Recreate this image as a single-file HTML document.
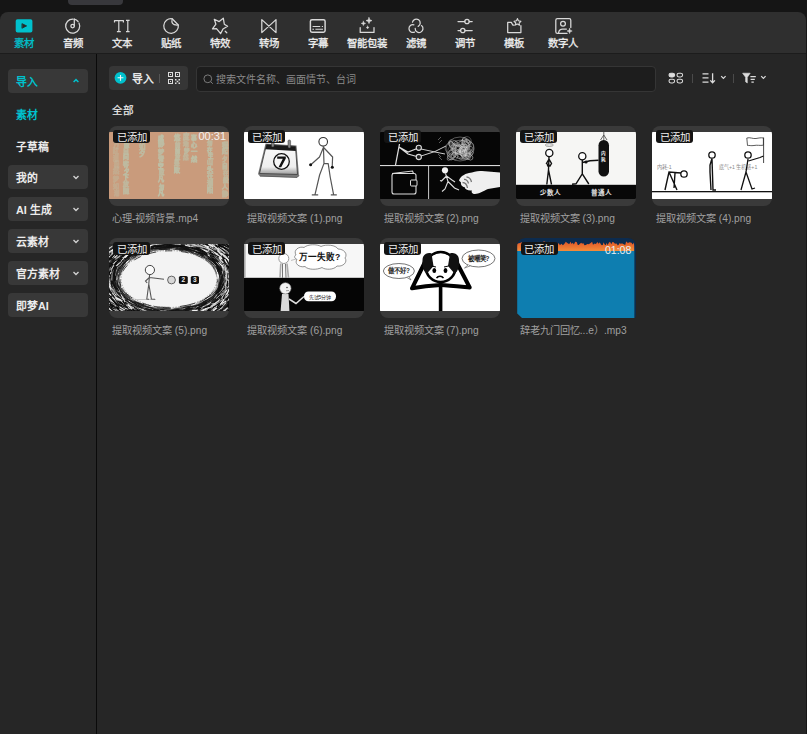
<!DOCTYPE html>
<html lang="zh-CN">
<head>
<meta charset="utf-8">
<style>
*{box-sizing:border-box;margin:0;padding:0}
html,body{width:807px;height:734px;overflow:hidden;background:#262626;font-family:"Liberation Sans",sans-serif;color:#e6e6e6}
.abs{position:absolute}
#top{left:0;top:0;width:807px;height:22px;background:#151515}
#toptab{left:68px;top:0;width:55px;height:4.8px;background:#38383c;border-radius:0 0 4px 4px}
#bar{left:0;top:12px;width:806px;height:41px;background:#2f2f2f;border-radius:8px 8px 0 0}
#barline{left:0;top:53px;width:806px;height:1px;background:#1c1c1c}
#rightedge{left:806px;top:0;width:1px;height:734px;background:#161616}
.tool{position:absolute;top:12px;width:49px;height:41px;text-align:center}
.tool svg{position:absolute;left:16px;top:5px}
.lb{position:absolute;top:36.8px;margin-left:-0.8px;width:49px;font-size:10.4px;line-height:14px;color:#f0f0f0;text-align:center;-webkit-text-stroke:0.3px currentColor}
#divider{left:96px;top:54px;width:1px;height:680px;background:#0a0a0a}
.sbtn{position:absolute;left:8px;width:80px;height:24px;background:#383838;border-radius:4px}
.stxt{position:absolute;left:16px;margin-top:1px;font-size:10.8px;line-height:24px;color:#ececec;font-weight:bold}
.chev{position:absolute;left:73px;top:9px}
.card{position:absolute;width:120px;height:80px;background:#3a3a3a;border-radius:8px;overflow:hidden}
.card .img{position:absolute;left:0;top:6px;width:120px;height:67px;overflow:hidden}
.badge{position:absolute;left:4.3px;top:4.3px;width:37px;height:13px;background:#141414;border-radius:3px;font-size:10.4px;line-height:16px;text-align:center;color:#f0f0f0}
.dur{position:absolute;right:3px;top:4px;font-size:11px;line-height:12px;color:#f0f0f0}
.clabel{position:absolute;font-size:10.2px;line-height:14px;color:#a0a0a0;white-space:nowrap}
</style>
</head>
<body>
<div class="abs" id="top"></div>
<div class="abs" id="toptab"></div>
<div class="abs" id="bar"></div>
<div class="abs" id="barline"></div>

<!-- toolbar -->
<svg class="abs" style="left:0;top:0" width="600" height="54" viewBox="0 0 600 54" fill="none" stroke="#d9d9d9" stroke-width="1.25" stroke-linecap="round" stroke-linejoin="round">
<rect x="15.7" y="19.2" width="16.7" height="13.4" rx="1.8" fill="#00c1cd" stroke="none"/>
<path d="M22.3 23.8 L26.6 25.9 L22.3 28.1 Z" fill="#262626" stroke="#262626" stroke-width="0.8"/>
<path d="M79 23.05 A7 7 0 1 1 73.1 19.1"/>
<path d="M74.3 19.1 A7 7 0 0 1 78.1 21.5"/>
<path d="M74.3 19.1 V26"/>
<circle cx="72.6" cy="26.1" r="1.75"/>
<g stroke-width="1.2" stroke-linecap="butt">
<path d="M114.3 20.7 H123.6 M114.5 20.2 V22.4 M123.4 20.2 V22.4 M118.8 20.6 V31.7 M116.9 31.7 H120.8"/>
<path d="M126 20.4 H129.6 M127.8 20.4 V31.7 M126 31.7 H129.6"/>
</g>
<path d="M172.2 18.8 A7.3 7.3 0 1 0 178.3 25 L172.2 18.8 Z"/>
<path d="M172.2 18.8 C171.3 22 171.8 25.6 178.3 25" stroke-width="1.15"/>
<path d="M214.3 19.3 L219.2 21.6 L223.3 18.2 L224.3 24.2 L227.6 26.3 L223 29 L220.6 33.6 L216.5 28.7 L212.5 28.9 L215.9 24.2 Z"/>
<path d="M225.2 31.2 L226.8 32.8"/>
<path d="M261.8 19.6 V32.6 L276 19.6 V32.6 Z"/>
<rect x="310.4" y="19.7" width="14.7" height="12.5" rx="1.6" stroke-width="1.45"/>
<path d="M312.6 26.5 H320.2 M321.8 26.5 H323" stroke-width="1.1" stroke-linecap="butt"/>
<path d="M312.4 29.3 H314 M315.4 29.3 H323" stroke-width="1.1" stroke-linecap="butt"/>
<path d="M360.2 27.5 V32.4 H374 V27.5"/>
<path d="M369 17.6 L369.8 19.8 L372 20.6 L369.8 21.4 L369 23.6 L368.2 21.4 L366 20.6 L368.2 19.8 Z" fill="#d9d9d9" stroke-width="0.6"/>
<path d="M363.4 21.2 L364 22.8 L365.6 23.4 L364 24 L363.4 25.6 L362.8 24 L361.2 23.4 L362.8 22.8 Z" fill="#d9d9d9" stroke-width="0.5"/>
<path d="M367.6 26 L368 27.1 L369.1 27.5 L368 27.9 L367.6 29 L367.2 27.9 L366.1 27.5 L367.2 27.1 Z" fill="#d9d9d9" stroke-width="0.4"/>
<path d="M412.5 22.2 A3.9 3.9 0 1 1 418.2 26.4"/>
<path d="M413.9 24.8 A3.9 3.9 0 1 0 414.5 32.1"/>
<path d="M415.2 28.4 A3.9 3.9 0 1 0 421.5 25.6"/>
<path d="M458 21.5 H464.8 M469.2 21.5 H472.2"/>
<circle cx="467" cy="21.5" r="2.2"/>
<path d="M458 30.5 H460.6 M465 30.5 H472.2"/>
<circle cx="462.8" cy="30.5" r="2.2"/>
<path d="M514.2 25.2 H512.9 L511.3 22.4 H507.7 V32.6 H520.9 V25.6"/>
<path d="M517.5 18.6 L518.4 20.8 L520.9 21.4 L519.1 23.1 L519.5 25.2 L517.4 24.1 L515.3 25.1 L515.8 23 L514 21.3 L516.5 20.8 Z" stroke-width="1.1"/>
<path d="M567 33.4 H557.4 Q555.8 33.4 555.8 31.8 V20.2 Q555.8 18.6 557.4 18.6 H569.2 Q570.8 18.6 570.8 20.2 V27.6"/>
<circle cx="563" cy="23.8" r="2.4"/>
<path d="M558.6 32.6 C559 30.2 560.5 29.1 562.5 29.1 H566.4"/>
<path d="M569.6 28.4 L570.3 30.3 L572.2 31 L570.3 31.7 L569.6 33.6 L568.9 31.7 L567 31 L568.9 30.3 Z" fill="#d9d9d9" stroke-width="0.5"/>
</svg>
<div class="lb" style="left:0px;color:#00c1cd">素材</div>
<div class="lb" style="left:49px">音频</div>
<div class="lb" style="left:98px">文本</div>
<div class="lb" style="left:147px">贴纸</div>
<div class="lb" style="left:196px">特效</div>
<div class="lb" style="left:245px">转场</div>
<div class="lb" style="left:294px">字幕</div>
<div class="lb" style="left:343px">智能包装</div>
<div class="lb" style="left:392px">滤镜</div>
<div class="lb" style="left:441px">调节</div>
<div class="lb" style="left:490px">模板</div>
<div class="lb" style="left:539px">数字人</div>

<div class="abs" id="divider"></div>

<!-- sidebar -->
<div class="sbtn" style="top:69px"></div>
<div class="stxt" style="top:69px;color:#00c1cd">导入</div>
<svg class="abs" style="left:72px;top:77px" width="8" height="8" viewBox="0 0 8 8"><path d="M1.6 5 L4 2.6 L6.4 5" fill="none" stroke="#00c1cd" stroke-width="1.5"/></svg>
<div class="stxt" style="top:102px;color:#00c1cd">素材</div>
<div class="stxt" style="top:134px">子草稿</div>
<div class="sbtn" style="top:165px"></div><div class="stxt" style="top:165px">我的</div>
<div class="sbtn" style="top:197px"></div><div class="stxt" style="top:197px">AI 生成</div>
<div class="sbtn" style="top:229px"></div><div class="stxt" style="top:229px">云素材</div>
<div class="sbtn" style="top:261px"></div><div class="stxt" style="top:261px">官方素材</div>
<div class="sbtn" style="top:293px"></div><div class="stxt" style="top:293px">即梦AI</div>
<svg class="abs" style="left:72px;top:172.5px" width="8" height="8" viewBox="0 0 8 8"><path d="M1.5 3 L4 5.5 L6.5 3" fill="none" stroke="#d0d0d0" stroke-width="1.4"/></svg>
<svg class="abs" style="left:72px;top:204.5px" width="8" height="8" viewBox="0 0 8 8"><path d="M1.5 3 L4 5.5 L6.5 3" fill="none" stroke="#d0d0d0" stroke-width="1.4"/></svg>
<svg class="abs" style="left:72px;top:236.5px" width="8" height="8" viewBox="0 0 8 8"><path d="M1.5 3 L4 5.5 L6.5 3" fill="none" stroke="#d0d0d0" stroke-width="1.4"/></svg>
<svg class="abs" style="left:72px;top:268.5px" width="8" height="8" viewBox="0 0 8 8"><path d="M1.5 3 L4 5.5 L6.5 3" fill="none" stroke="#d0d0d0" stroke-width="1.4"/></svg>

<!-- main header -->
<div class="abs" style="left:109px;top:66px;width:79px;height:24px;background:#363636;border-radius:4px"></div>
<svg class="abs" style="left:114px;top:71px" width="13" height="13" viewBox="0 0 13 13"><circle cx="6.5" cy="6.8" r="5.9" fill="#00c1cd"/><path d="M6.5 3.9 V9.7 M3.6 6.8 H9.4" stroke="#f4f4f4" stroke-width="1.1"/></svg>
<div class="abs" style="left:131.5px;top:67px;font-size:10.8px;line-height:24px;color:#e8e8e8;font-weight:bold">导入</div>
<div class="abs" style="left:159px;top:74px;width:1px;height:9px;background:#555"></div>
<svg class="abs" style="left:167px;top:71px" width="14" height="14" viewBox="0 0 14 14" fill="none" stroke="#dcdcdc" stroke-width="1"><rect x="1.5" y="1.5" width="4" height="4"/><rect x="8.5" y="1.5" width="4" height="4"/><rect x="1.5" y="8.5" width="4" height="4"/><path d="M3 3 H4 V4 H3Z M10 3 H11 V4 H10Z M3 10 H4 V11 H3Z M8 8 H9.5 V9.5 H8Z M11.5 8 H13 V9.5 H11.5Z M9.7 9.7 H11.3 V11.3 H9.7Z M8 11.5 H9.5 V13 H8Z M11.5 11.5 H13 V13 H11.5Z" fill="#dcdcdc" stroke="none"/></svg>
<div class="abs" style="left:196px;top:66px;width:460px;height:26px;background:#1d1d1d;border:1px solid #353535;border-radius:4px"></div>
<svg class="abs" style="left:203px;top:73.5px" width="11" height="11" viewBox="0 0 11 11"><circle cx="4.8" cy="4.8" r="3.9" fill="none" stroke="#7a7a7a" stroke-width="1"/><path d="M7.7 7.7 L9.8 9.8" stroke="#7a7a7a" stroke-width="1"/></svg>
<div class="abs" style="left:216px;top:67px;font-size:10px;line-height:25px;color:#8a8a8a">搜索文件名称、画面情节、台词</div>

<svg class="abs" style="left:668px;top:72px" width="16" height="12" viewBox="0 0 16 12" fill="none" stroke="#dcdcdc" stroke-width="1.1"><rect x="1" y="1.2" width="5.6" height="3.8" rx="1.9" fill="#dcdcdc"/><rect x="9" y="1.2" width="5.6" height="3.8" rx="1.9"/><rect x="1" y="7.2" width="5.6" height="3.8" rx="1.9"/><rect x="9" y="7.2" width="5.6" height="3.8" rx="1.9"/></svg>
<div class="abs" style="left:692px;top:74px;width:1px;height:9px;background:#4a4a4a"></div>
<svg class="abs" style="left:702px;top:72px" width="26" height="12" viewBox="0 0 26 12" fill="none" stroke="#dcdcdc" stroke-width="1.3"><path d="M0.5 1.8 H6.5 M0.5 5.9 H6.5 M0.5 10.2 H6.5 M10.6 1.2 V10.8 M8.3 8.4 L10.6 10.8 L12.9 8.4"/><path d="M19.2 4.2 L21.4 6.4 L23.6 4.2" stroke-width="1.2"/></svg>
<div class="abs" style="left:733px;top:74px;width:1px;height:9px;background:#4a4a4a"></div>
<svg class="abs" style="left:742px;top:72px" width="26" height="12" viewBox="0 0 26 12" fill="none" stroke="#dcdcdc" stroke-width="1.2"><path d="M0.6 1.2 H8.2 L5.3 5.3 V11 L3.6 9.8 V5.3 Z" fill="#dcdcdc" stroke-width="0.6"/><path d="M8.4 4.6 H13.8 M8.6 7.4 H12.8 M9.4 10.2 H11.8"/><path d="M19.2 4.2 L21.4 6.4 L23.6 4.2"/></svg>
<div class="abs" style="left:112px;top:102.3px;font-size:10.6px;line-height:16px;color:#ececec;-webkit-text-stroke:0.2px #ececec">全部</div>

<!-- CARDS -->
<div id="cards"><div class="card" style="left:109px;top:126px"><div class="img"><svg width="120" height="68" viewBox="0 0 120 68"><defs><filter id="vb" x="-10%" y="-10%" width="120%" height="120%"><feGaussianBlur stdDeviation="0.35"/></filter></defs><rect width="120" height="68" fill="#c99b7c"/><g filter="url(#vb)"><text x="7.0" y="14.5" font-size="6.3" text-anchor="middle" fill="#bdbfa6" stroke="#bdbfa6" stroke-width="0.55" opacity="0.43" font-weight="bold">万</text><text x="7.0" y="21.3" font-size="5.8" text-anchor="middle" fill="#bdbfa6" stroke="#bdbfa6" stroke-width="0.55" opacity="0.43" font-weight="bold">红</text><text x="7.0" y="27.6" font-size="5.5" text-anchor="middle" fill="#bdbfa6" stroke="#bdbfa6" stroke-width="0.55" opacity="0.40" font-weight="bold">潮</text><text x="7.0" y="34.1" font-size="5.3" text-anchor="middle" fill="#bdbfa6" stroke="#bdbfa6" stroke-width="0.55" opacity="0.43" font-weight="bold">程</text><text x="7.0" y="40.9" font-size="6.3" text-anchor="middle" fill="#bdbfa6" stroke="#bdbfa6" stroke-width="0.55" opacity="0.45" font-weight="bold">然</text><text x="7.0" y="48.5" font-size="5.9" text-anchor="middle" fill="#bdbfa6" stroke="#bdbfa6" stroke-width="0.55" opacity="0.43" font-weight="bold">梦</text><text x="7.0" y="56.2" font-size="5.9" text-anchor="middle" fill="#bdbfa6" stroke="#bdbfa6" stroke-width="0.55" opacity="0.41" font-weight="bold">如</text><text x="7.0" y="63.0" font-size="5.3" text-anchor="middle" fill="#bdbfa6" stroke="#bdbfa6" stroke-width="0.55" opacity="0.42" font-weight="bold">潮</text><text x="17.0" y="14.5" font-size="5.3" text-anchor="middle" fill="#bdbfa6" stroke="#bdbfa6" stroke-width="0.55" opacity="0.90" font-weight="bold">缘</text><text x="17.0" y="20.5" font-size="5.9" text-anchor="middle" fill="#bdbfa6" stroke="#bdbfa6" stroke-width="0.55" opacity="0.80" font-weight="bold">自</text><text x="17.0" y="26.8" font-size="5.8" text-anchor="middle" fill="#bdbfa6" stroke="#bdbfa6" stroke-width="0.55" opacity="0.89" font-weight="bold">问</text><text x="17.0" y="34.1" font-size="5.9" text-anchor="middle" fill="#bdbfa6" stroke="#bdbfa6" stroke-width="0.55" opacity="0.87" font-weight="bold">客</text><text x="17.0" y="40.8" font-size="5.4" text-anchor="middle" fill="#bdbfa6" stroke="#bdbfa6" stroke-width="0.55" opacity="0.94" font-weight="bold">夕</text><text x="17.0" y="46.8" font-size="5.8" text-anchor="middle" fill="#bdbfa6" stroke="#bdbfa6" stroke-width="0.55" opacity="0.96" font-weight="bold">下</text><text x="17.0" y="54.0" font-size="5.9" text-anchor="middle" fill="#bdbfa6" stroke="#bdbfa6" stroke-width="0.55" opacity="0.80" font-weight="bold">放</text><text x="17.0" y="61.1" font-size="6.1" text-anchor="middle" fill="#bdbfa6" stroke="#bdbfa6" stroke-width="0.55" opacity="0.81" font-weight="bold">随</text><text x="32.7" y="16.5" font-size="6.4" text-anchor="middle" fill="#bdbfa6" stroke="#bdbfa6" stroke-width="0.55" opacity="0.80" font-weight="bold">如</text><text x="32.7" y="24.0" font-size="6.3" text-anchor="middle" fill="#bdbfa6" stroke="#bdbfa6" stroke-width="0.55" opacity="0.85" font-weight="bold">夕</text><text x="52.0" y="7.5" font-size="5.8" text-anchor="middle" fill="#bdbfa6" stroke="#bdbfa6" stroke-width="0.55" opacity="1.00" font-weight="bold">成</text><text x="52.0" y="13.8" font-size="6.3" text-anchor="middle" fill="#bdbfa6" stroke="#bdbfa6" stroke-width="0.55" opacity="0.94" font-weight="bold">静</text><text x="52.0" y="21.5" font-size="6.1" text-anchor="middle" fill="#bdbfa6" stroke="#bdbfa6" stroke-width="0.55" opacity="0.91" font-weight="bold">梦</text><text x="52.0" y="28.7" font-size="6.2" text-anchor="middle" fill="#bdbfa6" stroke="#bdbfa6" stroke-width="0.55" opacity="0.90" font-weight="bold">青</text><text x="52.0" y="35.9" font-size="5.6" text-anchor="middle" fill="#bdbfa6" stroke="#bdbfa6" stroke-width="0.55" opacity="1.00" font-weight="bold">空</text><text x="52.0" y="42.4" font-size="5.3" text-anchor="middle" fill="#bdbfa6" stroke="#bdbfa6" stroke-width="0.55" opacity="0.85" font-weight="bold">败</text><text x="52.0" y="49.2" font-size="6.1" text-anchor="middle" fill="#bdbfa6" stroke="#bdbfa6" stroke-width="0.55" opacity="0.92" font-weight="bold">凡</text><text x="52.0" y="57.0" font-size="5.3" text-anchor="middle" fill="#bdbfa6" stroke="#bdbfa6" stroke-width="0.55" opacity="0.93" font-weight="bold">匆</text><text x="52.0" y="63.4" font-size="6.2" text-anchor="middle" fill="#bdbfa6" stroke="#bdbfa6" stroke-width="0.55" opacity="1.00" font-weight="bold">凡</text><text x="68.4" y="7.5" font-size="6.4" text-anchor="middle" fill="#bdbfa6" stroke="#bdbfa6" stroke-width="0.55" opacity="0.92" font-weight="bold">悠</text><text x="68.4" y="14.8" font-size="5.4" text-anchor="middle" fill="#bdbfa6" stroke="#bdbfa6" stroke-width="0.55" opacity="0.82" font-weight="bold">前</text><text x="68.4" y="20.9" font-size="5.2" text-anchor="middle" fill="#bdbfa6" stroke="#bdbfa6" stroke-width="0.55" opacity="0.95" font-weight="bold">前</text><text x="68.4" y="26.8" font-size="5.2" text-anchor="middle" fill="#bdbfa6" stroke="#bdbfa6" stroke-width="0.55" opacity="0.87" font-weight="bold">放</text><text x="68.4" y="32.9" font-size="5.6" text-anchor="middle" fill="#bdbfa6" stroke="#bdbfa6" stroke-width="0.55" opacity="0.81" font-weight="bold">是</text><text x="68.4" y="40.1" font-size="6.0" text-anchor="middle" fill="#bdbfa6" stroke="#bdbfa6" stroke-width="0.55" opacity="0.93" font-weight="bold">败</text><text x="77.3" y="6.5" font-size="6.3" text-anchor="middle" fill="#bdbfa6" stroke="#bdbfa6" stroke-width="0.55" opacity="0.79" font-weight="bold">度</text><text x="77.3" y="14.0" font-size="5.7" text-anchor="middle" fill="#bdbfa6" stroke="#bdbfa6" stroke-width="0.55" opacity="0.69" font-weight="bold">地</text><text x="77.3" y="21.0" font-size="5.4" text-anchor="middle" fill="#bdbfa6" stroke="#bdbfa6" stroke-width="0.55" opacity="0.84" font-weight="bold">梦</text><text x="77.3" y="27.4" font-size="5.6" text-anchor="middle" fill="#bdbfa6" stroke="#bdbfa6" stroke-width="0.55" opacity="0.68" font-weight="bold">然</text><text x="84.8" y="7.5" font-size="5.8" text-anchor="middle" fill="#bdbfa6" stroke="#bdbfa6" stroke-width="0.55" opacity="0.97" font-weight="bold">事</text><text x="84.8" y="14.6" font-size="6.2" text-anchor="middle" fill="#bdbfa6" stroke="#bdbfa6" stroke-width="0.55" opacity="0.90" font-weight="bold">心</text><text x="84.8" y="21.5" font-size="6.3" text-anchor="middle" fill="#bdbfa6" stroke="#bdbfa6" stroke-width="0.55" opacity="0.90" font-weight="bold">一</text><text x="84.8" y="28.9" font-size="6.2" text-anchor="middle" fill="#bdbfa6" stroke="#bdbfa6" stroke-width="0.55" opacity="0.98" font-weight="bold">然</text><text x="101.0" y="12.5" font-size="5.6" text-anchor="middle" fill="#bdbfa6" stroke="#bdbfa6" stroke-width="0.55" opacity="0.81" font-weight="bold">匆</text><text x="101.0" y="19.5" font-size="5.5" text-anchor="middle" fill="#bdbfa6" stroke="#bdbfa6" stroke-width="0.55" opacity="0.95" font-weight="bold">在</text><text x="101.0" y="25.7" font-size="5.4" text-anchor="middle" fill="#bdbfa6" stroke="#bdbfa6" stroke-width="0.55" opacity="0.97" font-weight="bold">生</text><text x="101.0" y="32.0" font-size="5.9" text-anchor="middle" fill="#bdbfa6" stroke="#bdbfa6" stroke-width="0.55" opacity="0.79" font-weight="bold">山</text><text x="101.0" y="39.0" font-size="6.2" text-anchor="middle" fill="#bdbfa6" stroke="#bdbfa6" stroke-width="0.55" opacity="0.92" font-weight="bold">头</text><text x="101.0" y="46.0" font-size="6.3" text-anchor="middle" fill="#bdbfa6" stroke="#bdbfa6" stroke-width="0.55" opacity="0.85" font-weight="bold">在</text><text x="101.0" y="53.0" font-size="6.1" text-anchor="middle" fill="#bdbfa6" stroke="#bdbfa6" stroke-width="0.55" opacity="0.85" font-weight="bold">潮</text><text x="101.0" y="59.9" font-size="6.1" text-anchor="middle" fill="#bdbfa6" stroke="#bdbfa6" stroke-width="0.55" opacity="0.93" font-weight="bold">阳</text><text x="116.0" y="14.5" font-size="6.2" text-anchor="middle" fill="#bdbfa6" stroke="#bdbfa6" stroke-width="0.55" opacity="0.80" font-weight="bold">程</text><text x="116.0" y="21.4" font-size="5.8" text-anchor="middle" fill="#bdbfa6" stroke="#bdbfa6" stroke-width="0.55" opacity="0.79" font-weight="bold">起</text><text x="116.0" y="29.0" font-size="5.5" text-anchor="middle" fill="#bdbfa6" stroke="#bdbfa6" stroke-width="0.55" opacity="0.72" font-weight="bold">夕</text><text x="116.0" y="35.9" font-size="5.7" text-anchor="middle" fill="#bdbfa6" stroke="#bdbfa6" stroke-width="0.55" opacity="0.83" font-weight="bold">自</text><text x="116.0" y="43.4" font-size="5.3" text-anchor="middle" fill="#bdbfa6" stroke="#bdbfa6" stroke-width="0.55" opacity="0.69" font-weight="bold">在</text><text x="116.0" y="49.8" font-size="5.4" text-anchor="middle" fill="#bdbfa6" stroke="#bdbfa6" stroke-width="0.55" opacity="0.78" font-weight="bold">般</text><text x="116.0" y="56.9" font-size="5.8" text-anchor="middle" fill="#bdbfa6" stroke="#bdbfa6" stroke-width="0.55" opacity="0.78" font-weight="bold">人</text><text x="116.0" y="64.2" font-size="6.2" text-anchor="middle" fill="#bdbfa6" stroke="#bdbfa6" stroke-width="0.55" opacity="0.69" font-weight="bold">静</text></g></svg></div><div class="badge">已添加</div><div class="dur">00:31</div></div><div class="clabel" style="left:112.0px;top:212px">心理-视频背景.mp4</div>
<div class="card" style="left:244px;top:126px"><div class="img"><svg width="120" height="68" viewBox="0 0 120 68"><rect width="120" height="68" fill="#fff"/>
<defs><linearGradient id="cg" x1="0" y1="0" x2="0" y2="1"><stop offset="0" stop-color="#fafafa"/><stop offset="0.75" stop-color="#eeeeee"/><stop offset="1" stop-color="#9a9a9a"/></linearGradient></defs>
<path d="M14 42 L21.5 11.5 L52.5 13.5 L55 44 L53 45.5 L16 44.5 Z" fill="#7a7a7a"/>
<path d="M15.5 41.5 L22.5 12.5 L51.5 14.5 L53.5 42.5 Z" fill="url(#cg)" stroke="#444" stroke-width="0.9"/>
<path d="M22.5 12.5 L51.5 14.5 L51.9 19 L21.4 17.2 Z" fill="#1a1a1a"/>
<rect x="27.5" y="7" width="2.6" height="8" rx="1.2" fill="#888" stroke="#333" stroke-width="0.5"/>
<rect x="44" y="8" width="2.6" height="8" rx="1.2" fill="#888" stroke="#333" stroke-width="0.5"/>
<path d="M16 44 L53 45.5 L55 43.5" fill="none" stroke="#555" stroke-width="0.8"/>
<circle cx="37.5" cy="29.5" r="7.8" fill="#f6f6f6" stroke="#111" stroke-width="1.3"/>
<path d="M33.2 24.6 H41.8 V26.4 L37.2 35.2 H34.5 L38.8 26.8 H33.2 Z" fill="#111"/>
<circle cx="79.2" cy="9.8" r="4.3" fill="#fff" stroke="#333" stroke-width="1.1"/>
<path d="M79.4 14.2 L80 31.4 M79.4 15.5 L75.5 25 L66.8 32.8 M79.6 15.5 L88.6 25 L88.2 35 M80 31.4 L75.6 43 L71 62.6 M80 31.4 L84.2 31.6 L86.2 45 L89.6 62.6 M67.8 62.8 L74.2 62.8 M86.8 62.8 L92.8 62.8" fill="none" stroke="#555" stroke-width="1.2" stroke-linejoin="round"/>
<circle cx="66.6" cy="32.8" r="1.5" fill="#111"/><circle cx="88.3" cy="35.2" r="1.5" fill="#111"/>
</svg></div><div class="badge">已添加</div></div><div class="clabel" style="left:247.25px;top:212px">提取视频文案 (1).png</div>
<div class="card" style="left:380px;top:126px"><div class="img"><svg width="120" height="68" viewBox="0 0 120 68"><rect width="120" height="68" fill="#060606"/><rect x="0" y="33" width="120" height="1.1" fill="#d8d8d8"/><rect x="48" y="34" width="1.1" height="34" fill="#bbb"/><ellipse cx="84.2" cy="12.2" rx="5.6" ry="3.3" transform="rotate(16 84.2 12.2)" fill="none" stroke="#e8e8e8" stroke-width="0.45"/><ellipse cx="88.9" cy="20.5" rx="3.9" ry="4.2" transform="rotate(130 88.9 20.5)" fill="none" stroke="#d0d0d0" stroke-width="0.45"/><ellipse cx="73.4" cy="11.0" rx="2.6" ry="4.7" transform="rotate(110 73.4 11.0)" fill="none" stroke="#a8a8a8" stroke-width="0.45"/><ellipse cx="81.9" cy="16.6" rx="5.7" ry="2.5" transform="rotate(4 81.9 16.6)" fill="none" stroke="#a8a8a8" stroke-width="0.45"/><ellipse cx="86.0" cy="20.6" rx="2.4" ry="4.2" transform="rotate(78 86.0 20.6)" fill="none" stroke="#a8a8a8" stroke-width="0.45"/><ellipse cx="87.4" cy="22.2" rx="2.8" ry="2.8" transform="rotate(90 87.4 22.2)" fill="none" stroke="#e8e8e8" stroke-width="0.45"/><ellipse cx="85.3" cy="14.2" rx="4.2" ry="4.5" transform="rotate(164 85.3 14.2)" fill="none" stroke="#d0d0d0" stroke-width="0.45"/><ellipse cx="77.1" cy="16.3" rx="4.3" ry="4.7" transform="rotate(149 77.1 16.3)" fill="none" stroke="#888" stroke-width="0.45"/><ellipse cx="87.6" cy="11.1" rx="2.6" ry="3.5" transform="rotate(140 87.6 11.1)" fill="none" stroke="#888" stroke-width="0.45"/><ellipse cx="82.2" cy="21.4" rx="2.6" ry="2.4" transform="rotate(100 82.2 21.4)" fill="none" stroke="#d0d0d0" stroke-width="0.45"/><ellipse cx="76.5" cy="17.3" rx="4.2" ry="4.4" transform="rotate(159 76.5 17.3)" fill="none" stroke="#d0d0d0" stroke-width="0.45"/><ellipse cx="71.1" cy="12.1" rx="2.2" ry="2.3" transform="rotate(101 71.1 12.1)" fill="none" stroke="#888" stroke-width="0.45"/><ellipse cx="85.2" cy="23.6" rx="3.8" ry="3.8" transform="rotate(125 85.2 23.6)" fill="none" stroke="#a8a8a8" stroke-width="0.45"/><ellipse cx="79.0" cy="17.5" rx="3.9" ry="4.8" transform="rotate(166 79.0 17.5)" fill="none" stroke="#e8e8e8" stroke-width="0.45"/><ellipse cx="87.9" cy="12.2" rx="3.8" ry="3.2" transform="rotate(80 87.9 12.2)" fill="none" stroke="#888" stroke-width="0.45"/><ellipse cx="71.5" cy="12.9" rx="2.3" ry="4.0" transform="rotate(161 71.5 12.9)" fill="none" stroke="#d0d0d0" stroke-width="0.45"/><ellipse cx="73.1" cy="20.5" rx="4.6" ry="2.4" transform="rotate(174 73.1 20.5)" fill="none" stroke="#a8a8a8" stroke-width="0.45"/><ellipse cx="74.4" cy="24.2" rx="3.6" ry="3.5" transform="rotate(29 74.4 24.2)" fill="none" stroke="#a8a8a8" stroke-width="0.45"/><ellipse cx="78.6" cy="17.2" rx="3.4" ry="2.6" transform="rotate(17 78.6 17.2)" fill="none" stroke="#e8e8e8" stroke-width="0.45"/><ellipse cx="77.3" cy="14.4" rx="3.8" ry="4.1" transform="rotate(60 77.3 14.4)" fill="none" stroke="#888" stroke-width="0.45"/><ellipse cx="82.5" cy="17.2" rx="2.3" ry="5.0" transform="rotate(175 82.5 17.2)" fill="none" stroke="#a8a8a8" stroke-width="0.45"/><ellipse cx="72.1" cy="13.2" rx="2.2" ry="4.3" transform="rotate(136 72.1 13.2)" fill="none" stroke="#e8e8e8" stroke-width="0.45"/><ellipse cx="86.4" cy="22.6" rx="4.7" ry="4.8" transform="rotate(27 86.4 22.6)" fill="none" stroke="#888" stroke-width="0.45"/><ellipse cx="88.4" cy="18.1" rx="4.8" ry="2.3" transform="rotate(144 88.4 18.1)" fill="none" stroke="#d0d0d0" stroke-width="0.45"/><ellipse cx="73.7" cy="23.3" rx="3.1" ry="2.1" transform="rotate(144 73.7 23.3)" fill="none" stroke="#d0d0d0" stroke-width="0.45"/><ellipse cx="71.7" cy="22.7" rx="2.3" ry="4.6" transform="rotate(2 71.7 22.7)" fill="none" stroke="#888" stroke-width="0.45"/><ellipse cx="89.9" cy="15.7" rx="5.7" ry="3.9" transform="rotate(95 89.9 15.7)" fill="none" stroke="#d0d0d0" stroke-width="0.45"/><ellipse cx="74.8" cy="10.8" rx="2.6" ry="2.2" transform="rotate(168 74.8 10.8)" fill="none" stroke="#a8a8a8" stroke-width="0.45"/><ellipse cx="82.6" cy="17.5" rx="2.8" ry="3.3" transform="rotate(49 82.6 17.5)" fill="none" stroke="#a8a8a8" stroke-width="0.45"/><ellipse cx="86.1" cy="24.9" rx="2.1" ry="2.1" transform="rotate(93 86.1 24.9)" fill="none" stroke="#a8a8a8" stroke-width="0.45"/><ellipse cx="74.9" cy="16.2" rx="4.6" ry="4.0" transform="rotate(98 74.9 16.2)" fill="none" stroke="#888" stroke-width="0.45"/><ellipse cx="87.8" cy="24.5" rx="3.2" ry="2.6" transform="rotate(62 87.8 24.5)" fill="none" stroke="#a8a8a8" stroke-width="0.45"/><ellipse cx="86.6" cy="20.3" rx="4.5" ry="3.2" transform="rotate(177 86.6 20.3)" fill="none" stroke="#e8e8e8" stroke-width="0.45"/><ellipse cx="86.7" cy="9.2" rx="4.5" ry="4.6" transform="rotate(29 86.7 9.2)" fill="none" stroke="#888" stroke-width="0.45"/><ellipse cx="71.7" cy="22.5" rx="5.5" ry="4.0" transform="rotate(108 71.7 22.5)" fill="none" stroke="#e8e8e8" stroke-width="0.45"/><ellipse cx="83.9" cy="9.7" rx="2.7" ry="2.8" transform="rotate(47 83.9 9.7)" fill="none" stroke="#d0d0d0" stroke-width="0.45"/><ellipse cx="89.2" cy="24.6" rx="4.2" ry="2.7" transform="rotate(39 89.2 24.6)" fill="none" stroke="#e8e8e8" stroke-width="0.45"/><ellipse cx="73.7" cy="14.4" rx="2.3" ry="2.8" transform="rotate(45 73.7 14.4)" fill="none" stroke="#a8a8a8" stroke-width="0.45"/><ellipse cx="85.5" cy="10.5" rx="5.3" ry="2.4" transform="rotate(71 85.5 10.5)" fill="none" stroke="#d0d0d0" stroke-width="0.45"/><ellipse cx="76.0" cy="19.1" rx="2.3" ry="4.9" transform="rotate(118 76.0 19.1)" fill="none" stroke="#a8a8a8" stroke-width="0.45"/><ellipse cx="84.3" cy="23.1" rx="3.6" ry="3.0" transform="rotate(27 84.3 23.1)" fill="none" stroke="#888" stroke-width="0.45"/><ellipse cx="84.5" cy="19.3" rx="2.2" ry="4.5" transform="rotate(132 84.5 19.3)" fill="none" stroke="#888" stroke-width="0.45"/><ellipse cx="86.2" cy="11.2" rx="4.1" ry="3.5" transform="rotate(149 86.2 11.2)" fill="none" stroke="#d0d0d0" stroke-width="0.45"/><ellipse cx="81.7" cy="23.3" rx="4.7" ry="4.1" transform="rotate(15 81.7 23.3)" fill="none" stroke="#a8a8a8" stroke-width="0.45"/><ellipse cx="70.8" cy="19.2" rx="5.8" ry="3.1" transform="rotate(101 70.8 19.2)" fill="none" stroke="#888" stroke-width="0.45"/><ellipse cx="82.6" cy="19.0" rx="4.7" ry="3.5" transform="rotate(82 82.6 19.0)" fill="none" stroke="#d0d0d0" stroke-width="0.45"/><ellipse cx="71.4" cy="23.9" rx="5.6" ry="2.3" transform="rotate(134 71.4 23.9)" fill="none" stroke="#d0d0d0" stroke-width="0.45"/><ellipse cx="79.5" cy="21.9" rx="5.4" ry="2.7" transform="rotate(42 79.5 21.9)" fill="none" stroke="#a8a8a8" stroke-width="0.45"/><ellipse cx="83.0" cy="16.4" rx="5.4" ry="2.2" transform="rotate(138 83.0 16.4)" fill="none" stroke="#e8e8e8" stroke-width="0.45"/><ellipse cx="82.3" cy="19.3" rx="2.3" ry="2.4" transform="rotate(117 82.3 19.3)" fill="none" stroke="#e8e8e8" stroke-width="0.45"/><ellipse cx="83.9" cy="18.9" rx="2.5" ry="3.4" transform="rotate(48 83.9 18.9)" fill="none" stroke="#888" stroke-width="0.45"/><ellipse cx="83.4" cy="20.1" rx="4.7" ry="2.9" transform="rotate(84 83.4 20.1)" fill="none" stroke="#e8e8e8" stroke-width="0.45"/><ellipse cx="79.3" cy="10.9" rx="5.6" ry="2.6" transform="rotate(169 79.3 10.9)" fill="none" stroke="#d0d0d0" stroke-width="0.45"/><ellipse cx="70.4" cy="16.3" rx="5.3" ry="4.9" transform="rotate(179 70.4 16.3)" fill="none" stroke="#888" stroke-width="0.45"/><ellipse cx="77.7" cy="23.7" rx="5.7" ry="2.2" transform="rotate(26 77.7 23.7)" fill="none" stroke="#d0d0d0" stroke-width="0.45"/><ellipse cx="80" cy="17" rx="14" ry="12" fill="none" stroke="#aaa" stroke-width="0.5"/><path d="M58 8 L61 5 M59 11 L62 8 M59 25 L62 28 M58 22 L61 25" stroke="#999" stroke-width="0.6"/><path d="M19.5 12 L15.5 33 M19 15 L28 20 L38.5 16 M19 15 L28 22 L38.5 25" fill="none" stroke="#ddd" stroke-width="1.3"/><circle cx="38.8" cy="15.8" r="2.6" fill="#222" stroke="#ddd" stroke-width="1.1"/><circle cx="38.8" cy="25" r="2.6" fill="#222" stroke="#ddd" stroke-width="1.1"/><path d="M41 17 L55 20 L65 22 M41 24 L55 19.5 L66 14" fill="none" stroke="#ccc" stroke-width="1"/><path d="M12 41.5 L32.5 39 L33.5 41.5" fill="none" stroke="#ddd" stroke-width="1.1"/><rect x="12" y="41.5" width="24" height="20.5" rx="2" fill="none" stroke="#ddd" stroke-width="1.1"/><rect x="30.5" y="48" width="6.5" height="6" rx="1" fill="#060606" stroke="#ddd" stroke-width="1"/><circle cx="65" cy="38.3" r="3.1" fill="#f2f2f2"/><path d="M65.5 41.4 L68 49.5 L65 57 L62 59.5 M68 49.5 L74.5 56 L79 58 M66.5 44 L61.5 49 L60 48.5 M66.5 44 L72 48 L75 50" fill="none" stroke="#ddd" stroke-width="1.1"/><path d="M79 48.5 C80 45 84 42 89 41 C94 40 97 38.5 102 39 L120 40.5 L120 55 L108 57 C103 59 99 62 95 62 C92 62 91 60 92 58.5 C88 59 85 57.5 84.5 55 C82 55 80.5 52.5 81 50.5 Z" fill="#efefef"/><path d="M84 47.5 C86 47 88 49 88.5 51.5 M82.5 50.5 C85 50.5 87 53 87.5 56 M86.5 45 C89 45 91 47.5 91.5 50" fill="none" stroke="#777" stroke-width="1.3"/></svg></div><div class="badge">已添加</div></div><div class="clabel" style="left:383.5px;top:212px">提取视频文案 (2).png</div>
<div class="card" style="left:516px;top:126px"><div class="img"><svg width="120" height="68" viewBox="0 0 120 68"><rect width="120" height="68" fill="#f6f6f4"/>
<rect x="0" y="52.8" width="120" height="15.2" fill="#080808"/>
<text x="34" y="63" font-size="6.5" font-weight="bold" text-anchor="middle" fill="#e0e0e0">少数人</text>
<text x="85.5" y="63" font-size="6.5" font-weight="bold" text-anchor="middle" fill="#e0e0e0">普通人</text>
<ellipse cx="33.3" cy="13" rx="4" ry="1.3" fill="none" stroke="#666" stroke-width="0.7"/>
<circle cx="33.3" cy="21" r="3.6" fill="#fff" stroke="#111" stroke-width="1.3"/>
<path d="M33 24.6 L32.5 38 L30.8 52.5 M32.5 38 L35.5 52.5 M33 27 L30.5 31.5 L34 34 L35.5 31.5 L33 27" fill="none" stroke="#111" stroke-width="1.4"/>
<circle cx="32.3" cy="33.5" r="1.4" fill="#111"/>
<circle cx="66.3" cy="24.2" r="3.6" fill="#fff" stroke="#111" stroke-width="1.3"/>
<path d="M66.3 27.8 L66.3 41.9 L60 51.8 L56 52.3 M66.3 41.9 L72.8 52 M66.5 30.5 L74 28.8 L82.5 28.2" fill="none" stroke="#111" stroke-width="1.4"/>
<circle cx="70" cy="30" r="1.6" fill="#111"/>
<path d="M87.8 0 L87.8 8 M84.5 8 L87.8 3 L91 8" fill="none" stroke="#444" stroke-width="0.8"/>
<rect x="82.5" y="8" width="10.5" height="36.5" rx="5.2" fill="#111"/>
<text x="87.7" y="22.5" font-size="4.6" font-weight="bold" text-anchor="middle" fill="#eee">内</text>
<text x="87.7" y="29" font-size="4.6" font-weight="bold" text-anchor="middle" fill="#eee">耗</text>
</svg></div><div class="badge">已添加</div></div><div class="clabel" style="left:519.75px;top:212px">提取视频文案 (3).png</div>
<div class="card" style="left:652px;top:126px"><div class="img"><svg width="120" height="68" viewBox="0 0 120 68"><rect width="120" height="68" fill="#fff"/>
<rect x="0" y="59" width="120" height="1.3" fill="#111"/>
<text x="5" y="37" font-size="5.2" fill="#8a8a8a">内耗-1</text>
<text x="67" y="37" font-size="5.2" fill="#8a8a8a">底气+1 生机感+1</text>
<circle cx="32" cy="42" r="3.2" fill="#fff" stroke="#111" stroke-width="1.3"/>
<path d="M29 41 L17 40 L13 58 M17 40 L25 58 M23 41 L22 56" fill="none" stroke="#111" stroke-width="1.4"/>
<circle cx="60" cy="23" r="3.2" fill="#fff" stroke="#111" stroke-width="1.3"/>
<path d="M60 26.5 L58 33 L58 40 L59 58 M60 27 L61 58 L64 58" fill="none" stroke="#111" stroke-width="1.4"/>
<path d="M94.8 6 C98 5 101 7 104 6.5 C107 6 109 5.5 111.4 6 L111.4 13.2 C108 13.8 105 12.8 102 13.5 C99 14 97 13.2 95.5 13.5 Z" fill="#fff" stroke="#333" stroke-width="0.8"/>
<path d="M111.6 5.5 L111.6 31" stroke="#333" stroke-width="0.9"/>
<circle cx="96" cy="23" r="3.2" fill="#fff" stroke="#111" stroke-width="1.3"/>
<path d="M96 27 L94 40 L89 58 M94 40 L100 57 L103 56 M96.5 29 L108 25.5 L111.5 24" fill="none" stroke="#111" stroke-width="1.3"/>
</svg></div><div class="badge">已添加</div></div><div class="clabel" style="left:656.0px;top:212px">提取视频文案 (4).png</div>
<div class="card" style="left:109px;top:238px"><div class="img"><svg width="120" height="68" viewBox="0 0 120 68"><rect width="120" height="68" fill="#2c2c2c"/><ellipse cx="55.6" cy="38.2" rx="65.6" ry="47.2" transform="rotate(-9.3 55.6 38.2)" fill="none" stroke="#000" stroke-width="0.75" stroke-dasharray="8.4 5.0" stroke-dashoffset="17.5"/><ellipse cx="65.4" cy="36.8" rx="62.2" ry="33.7" transform="rotate(-8.6 65.4 36.8)" fill="none" stroke="#111" stroke-width="0.77" stroke-dasharray="8.1 3.9" stroke-dashoffset="16.8"/><ellipse cx="64.1" cy="31.2" rx="52.0" ry="43.8" transform="rotate(9.6 64.1 31.2)" fill="none" stroke="#d0d0d0" stroke-width="1.14" stroke-dasharray="7.5 4.2" stroke-dashoffset="7.9"/><ellipse cx="58.3" cy="34.3" rx="78.0" ry="41.0" transform="rotate(-5.3 58.3 34.3)" fill="none" stroke="#0c0c0c" stroke-width="1.27" stroke-dasharray="4.6 6.0" stroke-dashoffset="12.7"/><ellipse cx="59.2" cy="33.2" rx="55.9" ry="47.5" transform="rotate(-1.7 59.2 33.2)" fill="none" stroke="#0c0c0c" stroke-width="1.21" stroke-dasharray="4.3 6.6" stroke-dashoffset="8.0"/><ellipse cx="56.4" cy="30.8" rx="74.8" ry="40.4" transform="rotate(6.1 56.4 30.8)" fill="none" stroke="#111" stroke-width="0.91" stroke-dasharray="11.7 3.7" stroke-dashoffset="1.0"/><ellipse cx="59.7" cy="33.4" rx="76.1" ry="33.2" transform="rotate(5.7 59.7 33.4)" fill="none" stroke="#0c0c0c" stroke-width="0.73" stroke-dasharray="11.8 4.4" stroke-dashoffset="4.8"/><ellipse cx="55.4" cy="36.4" rx="64.6" ry="42.4" transform="rotate(9.7 55.4 36.4)" fill="none" stroke="#f0f0f0" stroke-width="0.69" stroke-dasharray="10.0 3.3" stroke-dashoffset="18.1"/><ellipse cx="55.7" cy="31.9" rx="77.9" ry="38.6" transform="rotate(1.3 55.7 31.9)" fill="none" stroke="#f0f0f0" stroke-width="0.66" stroke-dasharray="7.8 4.2" stroke-dashoffset="16.2"/><ellipse cx="64.4" cy="33.8" rx="57.3" ry="31.3" transform="rotate(-5.5 64.4 33.8)" fill="none" stroke="#000" stroke-width="0.69" stroke-dasharray="13.0 5.0" stroke-dashoffset="11.5"/><ellipse cx="60.4" cy="37.9" rx="61.4" ry="42.7" transform="rotate(9.5 60.4 37.9)" fill="none" stroke="#d0d0d0" stroke-width="0.58" stroke-dasharray="8.6 5.9" stroke-dashoffset="8.6"/><ellipse cx="65.6" cy="31.3" rx="60.1" ry="44.8" transform="rotate(9.5 65.6 31.3)" fill="none" stroke="#111" stroke-width="1.14" stroke-dasharray="9.7 5.5" stroke-dashoffset="0.0"/><ellipse cx="63.9" cy="38.6" rx="62.2" ry="46.8" transform="rotate(-9.4 63.9 38.6)" fill="none" stroke="#111" stroke-width="0.72" stroke-dasharray="5.9 5.1" stroke-dashoffset="13.6"/><ellipse cx="61.8" cy="37.6" rx="76.5" ry="43.3" transform="rotate(6.6 61.8 37.6)" fill="none" stroke="#111" stroke-width="0.58" stroke-dasharray="4.0 2.8" stroke-dashoffset="11.4"/><ellipse cx="65.5" cy="36.3" rx="53.0" ry="43.2" transform="rotate(4.8 65.5 36.3)" fill="none" stroke="#000" stroke-width="1.07" stroke-dasharray="5.3 2.4" stroke-dashoffset="10.5"/><ellipse cx="56.7" cy="36.0" rx="67.2" ry="37.6" transform="rotate(11.9 56.7 36.0)" fill="none" stroke="#f0f0f0" stroke-width="0.98" stroke-dasharray="7.3 3.9" stroke-dashoffset="16.8"/><ellipse cx="60.6" cy="30.3" rx="58.3" ry="39.9" transform="rotate(-4.6 60.6 30.3)" fill="none" stroke="#111" stroke-width="1.13" stroke-dasharray="4.3 5.0" stroke-dashoffset="13.5"/><ellipse cx="62.0" cy="39.3" rx="62.9" ry="35.4" transform="rotate(4.7 62.0 39.3)" fill="none" stroke="#d0d0d0" stroke-width="0.94" stroke-dasharray="12.6 4.2" stroke-dashoffset="7.9"/><ellipse cx="64.1" cy="30.7" rx="52.2" ry="36.0" transform="rotate(-4.5 64.1 30.7)" fill="none" stroke="#111" stroke-width="1.37" stroke-dasharray="13.8 3.4" stroke-dashoffset="4.4"/><ellipse cx="65.4" cy="35.0" rx="71.8" ry="36.0" transform="rotate(-0.4 65.4 35.0)" fill="none" stroke="#d0d0d0" stroke-width="1.31" stroke-dasharray="14.9 2.3" stroke-dashoffset="11.9"/><ellipse cx="54.3" cy="36.0" rx="76.0" ry="31.9" transform="rotate(-10.6 54.3 36.0)" fill="none" stroke="#111" stroke-width="0.55" stroke-dasharray="8.7 7.4" stroke-dashoffset="17.7"/><ellipse cx="65.2" cy="33.3" rx="71.1" ry="48.0" transform="rotate(0.6 65.2 33.3)" fill="none" stroke="#d0d0d0" stroke-width="1.09" stroke-dasharray="9.6 3.9" stroke-dashoffset="14.5"/><ellipse cx="59.3" cy="31.1" rx="73.8" ry="47.7" transform="rotate(-3.6 59.3 31.1)" fill="none" stroke="#f0f0f0" stroke-width="0.75" stroke-dasharray="15.5 2.7" stroke-dashoffset="19.3"/><ellipse cx="63.9" cy="38.2" rx="57.4" ry="37.1" transform="rotate(4.9 63.9 38.2)" fill="none" stroke="#111" stroke-width="0.58" stroke-dasharray="6.3 5.2" stroke-dashoffset="8.9"/><ellipse cx="59.7" cy="36.3" rx="60.4" ry="43.5" transform="rotate(6.4 59.7 36.3)" fill="none" stroke="#d0d0d0" stroke-width="1.23" stroke-dasharray="4.5 2.2" stroke-dashoffset="1.3"/><ellipse cx="63.0" cy="39.0" rx="75.9" ry="35.4" transform="rotate(-4.0 63.0 39.0)" fill="none" stroke="#0c0c0c" stroke-width="0.83" stroke-dasharray="15.4 2.3" stroke-dashoffset="14.9"/><ellipse cx="57.6" cy="37.2" rx="69.9" ry="46.7" transform="rotate(3.2 57.6 37.2)" fill="none" stroke="#000" stroke-width="1.32" stroke-dasharray="15.3 2.1" stroke-dashoffset="4.7"/><ellipse cx="65.4" cy="33.9" rx="64.4" ry="47.3" transform="rotate(7.6 65.4 33.9)" fill="none" stroke="#0c0c0c" stroke-width="1.32" stroke-dasharray="5.6 5.0" stroke-dashoffset="0.2"/><ellipse cx="62.3" cy="31.5" rx="76.2" ry="36.2" transform="rotate(-4.3 62.3 31.5)" fill="none" stroke="#d0d0d0" stroke-width="0.80" stroke-dasharray="8.3 6.7" stroke-dashoffset="1.6"/><ellipse cx="57.0" cy="30.6" rx="57.1" ry="43.8" transform="rotate(1.1 57.0 30.6)" fill="none" stroke="#f0f0f0" stroke-width="0.93" stroke-dasharray="5.9 4.6" stroke-dashoffset="2.1"/><ellipse cx="56.5" cy="34.2" rx="53.9" ry="41.6" transform="rotate(-8.8 56.5 34.2)" fill="none" stroke="#111" stroke-width="0.66" stroke-dasharray="9.5 7.3" stroke-dashoffset="4.7"/><ellipse cx="63.1" cy="37.8" rx="66.0" ry="44.2" transform="rotate(1.6 63.1 37.8)" fill="none" stroke="#0c0c0c" stroke-width="0.76" stroke-dasharray="8.5 6.4" stroke-dashoffset="4.0"/><ellipse cx="55.8" cy="38.8" rx="58.4" ry="35.2" transform="rotate(-10.4 55.8 38.8)" fill="none" stroke="#000" stroke-width="0.67" stroke-dasharray="7.0 3.5" stroke-dashoffset="10.5"/><ellipse cx="59.6" cy="30.4" rx="68.9" ry="32.7" transform="rotate(7.7 59.6 30.4)" fill="none" stroke="#f0f0f0" stroke-width="0.93" stroke-dasharray="14.1 7.5" stroke-dashoffset="0.8"/><ellipse cx="56.3" cy="39.7" rx="59.6" ry="33.0" transform="rotate(-10.2 56.3 39.7)" fill="none" stroke="#000" stroke-width="0.67" stroke-dasharray="10.2 3.1" stroke-dashoffset="12.1"/><ellipse cx="54.1" cy="36.4" rx="72.1" ry="42.3" transform="rotate(-11.1 54.1 36.4)" fill="none" stroke="#000" stroke-width="0.81" stroke-dasharray="8.1 2.3" stroke-dashoffset="20.0"/><ellipse cx="65.0" cy="38.1" rx="53.0" ry="43.4" transform="rotate(-3.1 65.0 38.1)" fill="none" stroke="#0c0c0c" stroke-width="0.87" stroke-dasharray="11.5 2.5" stroke-dashoffset="0.6"/><ellipse cx="58.9" cy="38.0" rx="64.9" ry="39.2" transform="rotate(0.8 58.9 38.0)" fill="none" stroke="#000" stroke-width="0.64" stroke-dasharray="11.8 4.4" stroke-dashoffset="5.4"/><ellipse cx="59.0" cy="30.5" rx="77.7" ry="42.4" transform="rotate(-2.1 59.0 30.5)" fill="none" stroke="#000" stroke-width="1.30" stroke-dasharray="4.2 6.6" stroke-dashoffset="16.0"/><ellipse cx="58.9" cy="39.4" rx="68.8" ry="37.6" transform="rotate(-1.8 58.9 39.4)" fill="none" stroke="#111" stroke-width="1.31" stroke-dasharray="13.8 4.4" stroke-dashoffset="17.7"/><ellipse cx="54.2" cy="35.5" rx="64.0" ry="33.8" transform="rotate(2.9 54.2 35.5)" fill="none" stroke="#111" stroke-width="0.58" stroke-dasharray="8.5 5.0" stroke-dashoffset="2.9"/><ellipse cx="65.1" cy="31.1" rx="59.4" ry="39.9" transform="rotate(7.0 65.1 31.1)" fill="none" stroke="#111" stroke-width="1.18" stroke-dasharray="13.7 3.8" stroke-dashoffset="16.7"/><ellipse cx="57.8" cy="36.1" rx="53.1" ry="46.5" transform="rotate(5.1 57.8 36.1)" fill="none" stroke="#111" stroke-width="0.58" stroke-dasharray="12.3 7.3" stroke-dashoffset="12.8"/><ellipse cx="61.4" cy="32.0" rx="74.3" ry="41.6" transform="rotate(-6.8 61.4 32.0)" fill="none" stroke="#111" stroke-width="0.66" stroke-dasharray="8.8 5.1" stroke-dashoffset="7.7"/><ellipse cx="62.7" cy="39.0" rx="55.2" ry="35.2" transform="rotate(8.2 62.7 39.0)" fill="none" stroke="#f0f0f0" stroke-width="1.30" stroke-dasharray="12.1 6.0" stroke-dashoffset="6.5"/><ellipse cx="64.2" cy="37.8" rx="62.1" ry="38.7" transform="rotate(-6.0 64.2 37.8)" fill="none" stroke="#111" stroke-width="0.78" stroke-dasharray="8.7 4.2" stroke-dashoffset="10.1"/><ellipse cx="65.8" cy="34.7" rx="56.6" ry="31.1" transform="rotate(6.7 65.8 34.7)" fill="none" stroke="#111" stroke-width="1.19" stroke-dasharray="9.5 3.1" stroke-dashoffset="9.5"/><ellipse cx="59.2" cy="30.9" rx="54.8" ry="33.2" transform="rotate(3.8 59.2 30.9)" fill="none" stroke="#111" stroke-width="0.95" stroke-dasharray="4.5 2.8" stroke-dashoffset="18.4"/><ellipse cx="55.0" cy="37.5" rx="60.2" ry="43.2" transform="rotate(6.8 55.0 37.5)" fill="none" stroke="#111" stroke-width="1.09" stroke-dasharray="4.3 2.4" stroke-dashoffset="12.3"/><ellipse cx="55.6" cy="38.9" rx="70.0" ry="32.9" transform="rotate(10.0 55.6 38.9)" fill="none" stroke="#0c0c0c" stroke-width="1.36" stroke-dasharray="6.0 6.7" stroke-dashoffset="18.6"/><ellipse cx="63.1" cy="31.6" rx="53.7" ry="37.0" transform="rotate(7.6 63.1 31.6)" fill="none" stroke="#000" stroke-width="0.75" stroke-dasharray="5.7 5.0" stroke-dashoffset="18.4"/><ellipse cx="60.1" cy="33.2" rx="57.4" ry="35.5" transform="rotate(-2.3 60.1 33.2)" fill="none" stroke="#f0f0f0" stroke-width="0.68" stroke-dasharray="11.6 3.7" stroke-dashoffset="6.6"/><ellipse cx="57.2" cy="37.7" rx="61.8" ry="44.5" transform="rotate(-3.4 57.2 37.7)" fill="none" stroke="#f0f0f0" stroke-width="1.07" stroke-dasharray="14.5 5.3" stroke-dashoffset="11.6"/><ellipse cx="65.9" cy="36.3" rx="74.9" ry="32.8" transform="rotate(-3.1 65.9 36.3)" fill="none" stroke="#111" stroke-width="1.16" stroke-dasharray="8.5 4.2" stroke-dashoffset="2.9"/><ellipse cx="56.8" cy="36.2" rx="60.6" ry="32.4" transform="rotate(0.4 56.8 36.2)" fill="none" stroke="#f0f0f0" stroke-width="0.77" stroke-dasharray="7.7 7.8" stroke-dashoffset="17.4"/><ellipse cx="62.8" cy="37.5" rx="76.1" ry="46.2" transform="rotate(2.8 62.8 37.5)" fill="none" stroke="#d0d0d0" stroke-width="0.63" stroke-dasharray="9.2 5.1" stroke-dashoffset="17.9"/><ellipse cx="61.8" cy="30.2" rx="55.4" ry="34.9" transform="rotate(-4.7 61.8 30.2)" fill="none" stroke="#f0f0f0" stroke-width="1.01" stroke-dasharray="10.3 5.2" stroke-dashoffset="8.3"/><ellipse cx="58.4" cy="38.3" rx="59.8" ry="33.3" transform="rotate(10.5 58.4 38.3)" fill="none" stroke="#d0d0d0" stroke-width="0.62" stroke-dasharray="6.9 2.9" stroke-dashoffset="1.9"/><ellipse cx="63.4" cy="34.0" rx="68.6" ry="45.8" transform="rotate(-10.7 63.4 34.0)" fill="none" stroke="#0c0c0c" stroke-width="1.37" stroke-dasharray="13.9 7.4" stroke-dashoffset="11.9"/><ellipse cx="60.2" cy="34.9" rx="67.0" ry="41.2" transform="rotate(-10.9 60.2 34.9)" fill="none" stroke="#d0d0d0" stroke-width="1.31" stroke-dasharray="10.4 4.4" stroke-dashoffset="4.8"/><ellipse cx="54.1" cy="35.5" rx="53.5" ry="44.2" transform="rotate(-7.2 54.1 35.5)" fill="none" stroke="#d0d0d0" stroke-width="0.63" stroke-dasharray="11.3 5.0" stroke-dashoffset="12.8"/><ellipse cx="57.7" cy="33.0" rx="73.1" ry="34.0" transform="rotate(5.4 57.7 33.0)" fill="none" stroke="#f0f0f0" stroke-width="1.39" stroke-dasharray="9.7 5.2" stroke-dashoffset="7.5"/><ellipse cx="55.0" cy="36.6" rx="63.4" ry="46.5" transform="rotate(-9.5 55.0 36.6)" fill="none" stroke="#d0d0d0" stroke-width="0.70" stroke-dasharray="6.8 2.2" stroke-dashoffset="6.7"/><ellipse cx="64.1" cy="37.1" rx="71.5" ry="42.8" transform="rotate(4.3 64.1 37.1)" fill="none" stroke="#0c0c0c" stroke-width="1.07" stroke-dasharray="12.2 7.5" stroke-dashoffset="19.4"/><ellipse cx="64.7" cy="30.9" rx="59.7" ry="46.8" transform="rotate(-5.8 64.7 30.9)" fill="none" stroke="#000" stroke-width="0.51" stroke-dasharray="6.8 6.5" stroke-dashoffset="18.9"/><ellipse cx="64.6" cy="33.3" rx="71.4" ry="36.6" transform="rotate(8.4 64.6 33.3)" fill="none" stroke="#d0d0d0" stroke-width="0.84" stroke-dasharray="15.1 7.9" stroke-dashoffset="16.8"/><ellipse cx="60.4" cy="30.1" rx="65.9" ry="39.0" transform="rotate(5.4 60.4 30.1)" fill="none" stroke="#f0f0f0" stroke-width="0.89" stroke-dasharray="10.8 3.8" stroke-dashoffset="4.2"/><ellipse cx="64.9" cy="31.4" rx="68.2" ry="32.3" transform="rotate(2.9 64.9 31.4)" fill="none" stroke="#f0f0f0" stroke-width="0.60" stroke-dasharray="5.9 7.9" stroke-dashoffset="14.0"/><ellipse cx="61.7" cy="30.4" rx="52.8" ry="33.4" transform="rotate(-10.4 61.7 30.4)" fill="none" stroke="#f0f0f0" stroke-width="1.16" stroke-dasharray="11.1 4.2" stroke-dashoffset="16.4"/><ellipse cx="54.8" cy="38.7" rx="73.3" ry="46.2" transform="rotate(-7.1 54.8 38.7)" fill="none" stroke="#111" stroke-width="0.60" stroke-dasharray="5.3 2.2" stroke-dashoffset="17.0"/><ellipse cx="63.9" cy="36.3" rx="73.1" ry="41.8" transform="rotate(-8.8 63.9 36.3)" fill="none" stroke="#0c0c0c" stroke-width="0.93" stroke-dasharray="13.5 5.9" stroke-dashoffset="5.9"/><ellipse cx="58.2" cy="39.3" rx="60.7" ry="35.4" transform="rotate(-3.2 58.2 39.3)" fill="none" stroke="#f0f0f0" stroke-width="1.14" stroke-dasharray="7.8 7.8" stroke-dashoffset="10.1"/><ellipse cx="54.4" cy="34.1" rx="74.1" ry="41.5" transform="rotate(-9.6 54.4 34.1)" fill="none" stroke="#111" stroke-width="0.97" stroke-dasharray="9.6 2.3" stroke-dashoffset="11.3"/><ellipse cx="60.9" cy="32.9" rx="70.6" ry="45.1" transform="rotate(-7.2 60.9 32.9)" fill="none" stroke="#111" stroke-width="0.50" stroke-dasharray="13.1 7.9" stroke-dashoffset="0.1"/><ellipse cx="63.6" cy="31.8" rx="64.8" ry="39.4" transform="rotate(11.0 63.6 31.8)" fill="none" stroke="#111" stroke-width="1.03" stroke-dasharray="10.2 5.5" stroke-dashoffset="3.2"/><ellipse cx="56.8" cy="31.7" rx="73.2" ry="47.0" transform="rotate(11.8 56.8 31.7)" fill="none" stroke="#f0f0f0" stroke-width="0.94" stroke-dasharray="10.7 2.6" stroke-dashoffset="6.5"/><ellipse cx="64.7" cy="37.5" rx="54.5" ry="46.8" transform="rotate(-11.4 64.7 37.5)" fill="none" stroke="#111" stroke-width="1.30" stroke-dasharray="6.5 3.6" stroke-dashoffset="18.0"/><ellipse cx="64.6" cy="32.3" rx="65.0" ry="37.4" transform="rotate(2.3 64.6 32.3)" fill="none" stroke="#111" stroke-width="0.61" stroke-dasharray="12.3 5.6" stroke-dashoffset="0.7"/><ellipse cx="64.4" cy="34.5" rx="67.1" ry="39.9" transform="rotate(-7.9 64.4 34.5)" fill="none" stroke="#000" stroke-width="1.17" stroke-dasharray="9.3 6.6" stroke-dashoffset="11.6"/><ellipse cx="64.6" cy="32.4" rx="55.3" ry="38.9" transform="rotate(6.1 64.6 32.4)" fill="none" stroke="#d0d0d0" stroke-width="0.74" stroke-dasharray="13.9 5.7" stroke-dashoffset="14.5"/><ellipse cx="61.2" cy="33.5" rx="77.3" ry="43.3" transform="rotate(-7.5 61.2 33.5)" fill="none" stroke="#d0d0d0" stroke-width="0.80" stroke-dasharray="15.7 6.4" stroke-dashoffset="2.0"/><ellipse cx="58.6" cy="39.8" rx="77.0" ry="32.7" transform="rotate(-1.6 58.6 39.8)" fill="none" stroke="#0c0c0c" stroke-width="1.16" stroke-dasharray="6.4 5.8" stroke-dashoffset="2.1"/><ellipse cx="54.4" cy="34.0" rx="57.4" ry="37.6" transform="rotate(0.0 54.4 34.0)" fill="none" stroke="#111" stroke-width="1.12" stroke-dasharray="11.6 4.8" stroke-dashoffset="2.8"/><ellipse cx="62.9" cy="39.1" rx="67.7" ry="37.9" transform="rotate(2.1 62.9 39.1)" fill="none" stroke="#111" stroke-width="1.13" stroke-dasharray="11.8 7.1" stroke-dashoffset="13.4"/><ellipse cx="61.7" cy="35.8" rx="69.0" ry="45.9" transform="rotate(3.4 61.7 35.8)" fill="none" stroke="#d0d0d0" stroke-width="1.11" stroke-dasharray="9.4 3.9" stroke-dashoffset="12.6"/><ellipse cx="63.4" cy="37.1" rx="54.5" ry="38.1" transform="rotate(-1.8 63.4 37.1)" fill="none" stroke="#d0d0d0" stroke-width="0.73" stroke-dasharray="9.5 5.7" stroke-dashoffset="8.2"/><ellipse cx="56.2" cy="36.5" rx="69.6" ry="46.8" transform="rotate(-0.2 56.2 36.5)" fill="none" stroke="#f0f0f0" stroke-width="0.85" stroke-dasharray="15.7 2.2" stroke-dashoffset="10.9"/><ellipse cx="65.3" cy="35.2" rx="56.2" ry="44.3" transform="rotate(-1.0 65.3 35.2)" fill="none" stroke="#f0f0f0" stroke-width="1.26" stroke-dasharray="6.5 4.9" stroke-dashoffset="0.3"/><ellipse cx="58.1" cy="37.4" rx="72.6" ry="37.3" transform="rotate(4.4 58.1 37.4)" fill="none" stroke="#111" stroke-width="0.69" stroke-dasharray="8.7 6.6" stroke-dashoffset="2.4"/><ellipse cx="54.7" cy="32.7" rx="77.6" ry="37.0" transform="rotate(-10.2 54.7 32.7)" fill="none" stroke="#111" stroke-width="0.56" stroke-dasharray="15.0 5.8" stroke-dashoffset="13.5"/><path d="M112.1 35.0 L109.5 38.9 L109.1 42.8 L107.4 46.7 L106.6 51.1 L102.8 54.6 L98.2 57.8 L92.8 60.5 L85.8 61.6 L79.2 62.6 L73.9 66.0 L66.5 64.4 L60.0 66.7 L53.4 64.7 L46.4 65.2 L39.8 64.1 L33.4 62.5 L29.5 58.7 L22.9 57.1 L17.7 54.3 L14.0 50.8 L12.6 46.7 L7.8 43.3 L7.5 39.1 L7.6 35.0 L7.4 30.9 L10.2 27.0 L11.0 22.9 L16.3 20.0 L18.2 15.9 L22.8 12.8 L27.1 9.5 L33.7 7.9 L40.2 6.6 L46.2 4.4 L53.1 3.6 L60.0 4.6 L66.8 4.0 L73.2 5.7 L79.8 6.5 L86.2 8.0 L90.3 11.4 L97.9 12.4 L99.8 16.8 L104.0 19.9 L107.3 23.3 L108.1 27.3 L111.6 31.0 Z" fill="#f3f3f3"/><ellipse cx="60.2" cy="34.4" rx="51.9" ry="33.8" fill="none" stroke="#151515" stroke-width="0.65" stroke-dasharray="15.2 6.1" stroke-dashoffset="2.2"/><ellipse cx="60.4" cy="36.4" rx="51.8" ry="32.4" fill="none" stroke="#151515" stroke-width="0.41" stroke-dasharray="12.3 11.8" stroke-dashoffset="6.3"/><ellipse cx="60.5" cy="35.8" rx="52.4" ry="32.1" fill="none" stroke="#151515" stroke-width="0.89" stroke-dasharray="7.3 13.0" stroke-dashoffset="16.5"/><ellipse cx="60.0" cy="33.9" rx="53.8" ry="31.2" fill="none" stroke="#151515" stroke-width="0.35" stroke-dasharray="17.7 10.7" stroke-dashoffset="3.5"/><ellipse cx="61.6" cy="34.9" rx="50.7" ry="31.7" fill="none" stroke="#151515" stroke-width="0.63" stroke-dasharray="12.8 13.1" stroke-dashoffset="21.0"/><ellipse cx="60.5" cy="35.9" rx="51.5" ry="30.7" fill="none" stroke="#151515" stroke-width="0.40" stroke-dasharray="10.5 11.0" stroke-dashoffset="14.9"/><ellipse cx="59.6" cy="37.0" rx="51.8" ry="31.9" fill="none" stroke="#151515" stroke-width="0.71" stroke-dasharray="8.5 7.6" stroke-dashoffset="19.4"/><ellipse cx="61.2" cy="37.0" rx="50.1" ry="30.2" fill="none" stroke="#151515" stroke-width="0.79" stroke-dasharray="7.3 8.8" stroke-dashoffset="22.7"/><ellipse cx="59.6" cy="33.5" rx="50.9" ry="30.9" fill="none" stroke="#151515" stroke-width="0.36" stroke-dasharray="15.2 7.4" stroke-dashoffset="23.4"/><ellipse cx="58.9" cy="34.4" rx="53.3" ry="33.6" fill="none" stroke="#151515" stroke-width="0.45" stroke-dasharray="6.7 6.9" stroke-dashoffset="10.7"/><ellipse cx="62.4" cy="36.5" rx="53.0" ry="31.3" fill="none" stroke="#151515" stroke-width="0.51" stroke-dasharray="8.8 8.9" stroke-dashoffset="3.5"/><ellipse cx="58.1" cy="36.9" rx="51.2" ry="32.9" fill="none" stroke="#151515" stroke-width="0.35" stroke-dasharray="20.0 8.0" stroke-dashoffset="16.6"/><ellipse cx="59.5" cy="33.4" rx="52.4" ry="32.3" fill="none" stroke="#151515" stroke-width="0.33" stroke-dasharray="17.5 8.8" stroke-dashoffset="23.0"/><ellipse cx="60.2" cy="34.5" rx="50.4" ry="32.0" fill="none" stroke="#151515" stroke-width="0.39" stroke-dasharray="15.4 10.9" stroke-dashoffset="26.3"/><ellipse cx="60.7" cy="35.5" rx="50.5" ry="30.2" fill="none" stroke="#151515" stroke-width="0.40" stroke-dasharray="15.3 12.7" stroke-dashoffset="12.6"/><ellipse cx="57.6" cy="36.5" rx="50.6" ry="33.7" fill="none" stroke="#151515" stroke-width="0.38" stroke-dasharray="10.3 11.1" stroke-dashoffset="25.9"/><ellipse cx="57.6" cy="35.3" rx="51.1" ry="30.1" fill="none" stroke="#151515" stroke-width="0.65" stroke-dasharray="18.8 9.0" stroke-dashoffset="15.7"/><ellipse cx="59.6" cy="35.8" rx="54.9" ry="33.1" fill="none" stroke="#151515" stroke-width="0.54" stroke-dasharray="6.9 10.8" stroke-dashoffset="17.8"/><ellipse cx="58.3" cy="36.1" rx="56.0" ry="32.6" fill="none" stroke="#151515" stroke-width="0.63" stroke-dasharray="7.2 8.7" stroke-dashoffset="26.9"/><ellipse cx="57.5" cy="35.7" rx="53.8" ry="31.7" fill="none" stroke="#151515" stroke-width="0.89" stroke-dasharray="18.0 6.2" stroke-dashoffset="3.6"/><ellipse cx="60.3" cy="34.8" rx="52.8" ry="31.1" fill="none" stroke="#151515" stroke-width="0.75" stroke-dasharray="18.9 7.7" stroke-dashoffset="22.4"/><ellipse cx="61.3" cy="34.2" rx="54.2" ry="30.6" fill="none" stroke="#151515" stroke-width="0.63" stroke-dasharray="13.0 10.7" stroke-dashoffset="26.7"/><ellipse cx="57.7" cy="33.2" rx="55.5" ry="30.2" fill="none" stroke="#151515" stroke-width="0.83" stroke-dasharray="15.6 10.2" stroke-dashoffset="11.7"/><ellipse cx="62.3" cy="36.3" rx="51.9" ry="32.4" fill="none" stroke="#151515" stroke-width="0.67" stroke-dasharray="10.4 13.5" stroke-dashoffset="21.8"/><ellipse cx="62.3" cy="33.5" rx="52.8" ry="30.7" fill="none" stroke="#151515" stroke-width="0.87" stroke-dasharray="8.3 12.0" stroke-dashoffset="14.3"/><ellipse cx="58.9" cy="36.0" rx="54.7" ry="31.8" fill="none" stroke="#151515" stroke-width="0.50" stroke-dasharray="9.9 10.2" stroke-dashoffset="19.5"/><ellipse cx="60" cy="35" rx="48" ry="28.5" fill="none" stroke="#666" stroke-width="0.6" stroke-dasharray="1.4 1.4"/><path d="M27 55.5 H47" stroke="#bbb" stroke-width="0.8"/><circle cx="40.9" cy="26" r="4.6" fill="#fafafa" stroke="#444" stroke-width="1"/><path d="M40.6 30.6 L39.8 40 L37.8 55 L40 55.3 M39.8 40 L42.4 55 L46 55.3 M40.5 33.5 L55 35.3 M40.4 33.5 L36.5 37 L38.2 39" fill="none" stroke="#555" stroke-width="1.1"/><circle cx="62.5" cy="36" r="3.9" fill="#d8d8d8" stroke="#555" stroke-width="0.9"/><rect x="69.9" y="32" width="8.9" height="7.9" rx="1.6" fill="#111"/><rect x="81.8" y="32" width="8.2" height="7.9" rx="1.6" fill="#111"/><text x="74.3" y="38.3" font-family="Liberation Sans" font-size="6.5" font-weight="bold" text-anchor="middle" fill="#eee">2</text><text x="85.9" y="38.3" font-family="Liberation Sans" font-size="6.5" font-weight="bold" text-anchor="middle" fill="#eee">3</text></svg></div><div class="badge">已添加</div></div><div class="clabel" style="left:112.0px;top:324px">提取视频文案 (5).png</div>
<div class="card" style="left:244px;top:238px"><div class="img"><svg width="120" height="68" viewBox="0 0 120 68"><rect width="120" height="68" fill="#050505"/>
<rect x="0" y="0" width="120" height="33.8" fill="#f7f7f7"/>
<rect x="0" y="0" width="1.6" height="33.8" fill="#aaa"/>
<circle cx="39.8" cy="14.5" r="5" fill="#fff" stroke="#999" stroke-width="1"/>
<path d="M36.8 19.5 L36 33.8 M43 19.5 L44.5 33.8" stroke="#aaa" stroke-width="1.6"/>
<path d="M38.5 20 L38.5 33.8 M41.5 20 L42 33.8" stroke="#666" stroke-width="0.9"/>
<path d="M52 11 C49 6 55 2 60 3.5 C64 0 73 0 77 2.5 C82 0 92 1 94 5 C100 5 104 10 101 14 C104 18 99 23 93 22 C90 26 81 26 78 23.5 C73 26 64 26 61 22.5 C55 24 50 19 53 15.5 C50 14 50 12 52 11 Z" fill="#fff" stroke="#777" stroke-width="0.8"/>
<path d="M52 15 L47 16.5" stroke="#999" stroke-width="0.6"/>
<text x="75.5" y="16" font-size="8.6" font-weight="bold" text-anchor="middle" fill="#111">万一失败?</text>
<path d="M38 50 L36.5 68 L45.5 68 L44.5 50 Z" fill="#d8d8d8"/>
<circle cx="41.4" cy="44.3" r="5.6" fill="#f2f2f2" stroke="#999" stroke-width="0.6"/>
<circle cx="43" cy="43.5" r="0.7" fill="#222"/><path d="M42 46.8 L45 46.5" stroke="#444" stroke-width="0.5"/>
<path d="M45 55 L52 59.5 L60 52.5" fill="none" stroke="#ddd" stroke-width="1.5"/>
<rect x="60" y="47.5" width="32" height="9.7" rx="4.5" fill="#fff"/>
<text x="76" y="54.5" font-size="5" text-anchor="middle" fill="#222">先试5分钟</text>
</svg></div><div class="badge">已添加</div></div><div class="clabel" style="left:247.25px;top:324px">提取视频文案 (6).png</div>
<div class="card" style="left:380px;top:238px"><div class="img"><svg width="120" height="68" viewBox="0 0 120 68"><rect width="120" height="68" fill="#fff"/>
<path d="M60.5 41 C52 41.5 42 42.5 32 44.3 L44.5 19" fill="none" stroke="#000" stroke-width="4" stroke-linecap="round" stroke-linejoin="round"/>
<path d="M60.5 41 C69 41.5 79 42.5 89.7 43.5 L77 19" fill="none" stroke="#000" stroke-width="4" stroke-linecap="round" stroke-linejoin="round"/>
<circle cx="60.7" cy="23" r="15" fill="#fff" stroke="#000" stroke-width="2.6"/>
<path d="M42.5 16 C42.5 10.5 47.5 8 51.5 9.5 L53.5 22 L47 29.5 C43 27.5 42 21 42.5 16 Z" fill="#111"/>
<path d="M79 16 C79 10.5 74 8 70 9.5 L68 22 L74.5 29.5 C78.5 27.5 79.5 21 79 16 Z" fill="#111"/>
<ellipse cx="54.3" cy="26.6" rx="1.9" ry="2.5" fill="#000"/><ellipse cx="65.5" cy="26.6" rx="1.9" ry="2.5" fill="#000"/>
<path d="M51.5 22 L56 23 M68.5 22 L64 23" stroke="#000" stroke-width="1"/>
<path d="M56.5 34.2 C58 31.5 62 31.5 63.5 34.2" fill="none" stroke="#000" stroke-width="1.5"/>
<rect x="58.8" y="38" width="3.6" height="30" fill="#000"/>
<ellipse cx="18.9" cy="27" rx="15.5" ry="7.5" fill="#fff" stroke="#666" stroke-width="0.9"/>
<path d="M27 33.5 L31 36 L29 33" fill="#fff" stroke="#666" stroke-width="0.7"/>
<text x="19" y="29.3" font-size="6.4" font-weight="bold" text-anchor="middle" fill="#222">做不好?</text>
<ellipse cx="98.5" cy="14.5" rx="16.5" ry="8.5" fill="#fff" stroke="#666" stroke-width="0.9"/>
<path d="M88 21 L84.5 24 L90 22" fill="#fff" stroke="#666" stroke-width="0.7"/>
<text x="98.5" y="16.8" font-size="6.4" font-weight="bold" text-anchor="middle" fill="#222">被嘲笑?</text>
</svg></div><div class="badge">已添加</div></div><div class="clabel" style="left:383.5px;top:324px">提取视频文案 (7).png</div>
<div class="card" style="left:516.6px;top:238px;width:119.4px;background:transparent;border-radius:8px 8px 0 0"><svg class="abs" style="left:0;top:0" width="120" height="80" viewBox="0 0 120 80">
<defs><linearGradient id="og" x1="0" y1="0" x2="0" y2="1"><stop offset="0" stop-color="#df5526"/><stop offset="1" stop-color="#f48d3b"/></linearGradient></defs>
<path d="M0 8 Q0 0 8 0 H111.4 Q119.4 0 119.4 8 V77 Q119.4 80 116.4 80 H117.4 V13 H0 Z" fill="#0c2b4e"/>
<path d="M0 8 L0.0 5.9 L1.5 5.2 L3.0 5.0 L4.3 4.0 L5.7 6.9 L6.9 5.9 L8.0 7.2 L9.0 4.0 L10.1 4.6 L11.0 6.0 L12.1 7.4 L13.6 6.0 L14.8 7.3 L15.8 3.8 L17.0 6.3 L17.8 5.3 L19.0 6.5 L20.5 3.8 L21.8 5.9 L22.9 6.5 L23.8 5.8 L24.8 4.9 L26.3 3.6 L27.7 3.5 L28.6 4.6 L29.8 3.8 L31.3 5.8 L32.6 3.6 L33.5 5.8 L35.1 5.9 L36.7 7.4 L38.1 4.0 L39.0 7.2 L40.3 6.9 L41.5 5.0 L42.7 7.2 L44.2 5.7 L45.7 7.2 L47.2 5.8 L48.6 3.7 L50.1 4.9 L51.2 5.7 L52.1 5.9 L53.3 3.8 L54.5 5.9 L55.5 4.8 L56.7 6.5 L58.0 3.7 L59.5 4.1 L60.6 7.0 L61.5 6.9 L63.0 5.5 L64.1 4.7 L64.9 5.8 L66.0 5.0 L67.3 7.2 L68.6 7.1 L70.1 6.0 L71.1 6.3 L72.4 5.8 L73.8 4.7 L74.9 3.8 L75.8 6.7 L77.3 5.5 L78.1 6.1 L79.2 5.6 L80.1 4.0 L81.5 5.8 L82.5 4.2 L83.8 6.4 L84.7 7.3 L85.6 7.0 L86.4 4.2 L87.3 6.3 L88.6 7.3 L89.5 4.8 L90.3 7.3 L91.8 4.6 L92.8 3.7 L94.1 6.3 L95.2 4.1 L96.4 4.2 L97.8 5.8 L99.4 5.4 L100.7 7.5 L101.6 6.6 L102.5 5.0 L103.8 5.9 L104.7 5.3 L106.0 5.9 L107.0 6.5 L108.0 6.9 L108.9 3.7 L109.7 3.7 L110.6 5.3 L111.9 4.2 L113.4 4.6 L114.3 4.8 L115.6 6.6 L116.7 4.6 L117 8 L117 13 L0 13 Z" transform="translate(0.2,0)" fill="url(#og)"/>
<path d="M0.2 13 H117.4 V80 H5 L0.2 75.5 Z" fill="#0e7eb0"/>
</svg><div class="badge">已添加</div><div class="dur" style="top:5.6px;right:4.6px;font-size:10.6px;color:#e6eef4">01:08</div></div>
<div class="clabel" style="left:519.75px;top:324px">辞老九门回忆...e）.mp3</div>
</div><!--/cards-->

<div class="abs" id="rightedge"></div>
</body>
</html>
